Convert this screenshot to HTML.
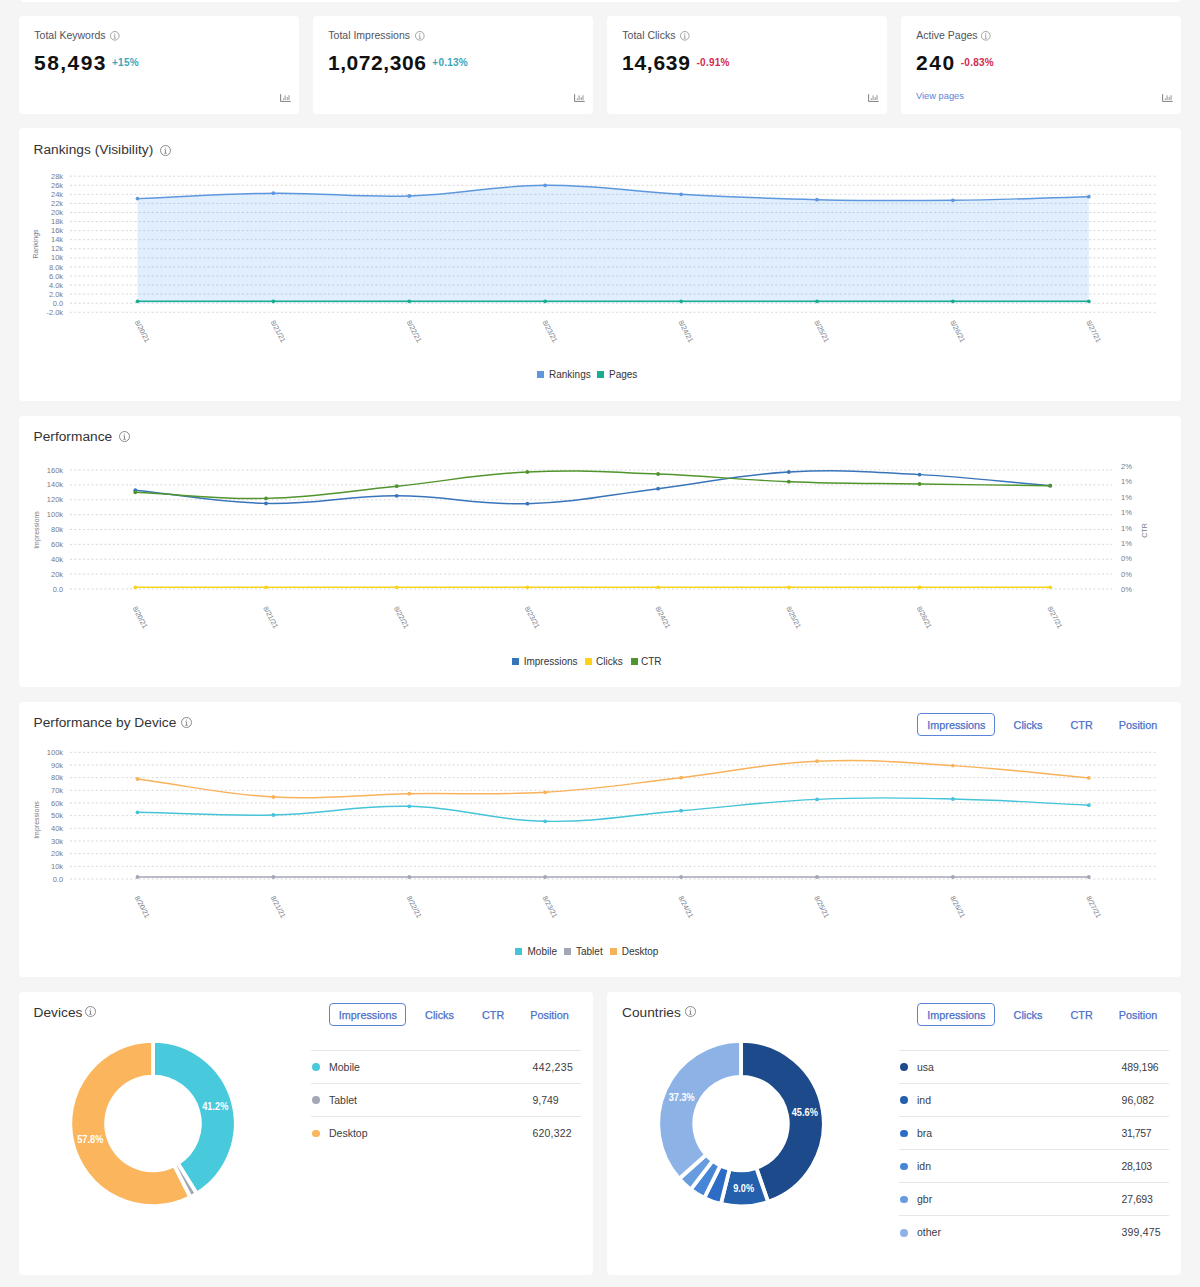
<!DOCTYPE html>
<html><head><meta charset="utf-8">
<style>
*{box-sizing:border-box;margin:0;padding:0}
html,body{width:1200px;height:1287px;overflow:hidden;background:#f5f5f5;font-family:"Liberation Sans", sans-serif;}
.card{position:absolute;background:#fff;border-radius:4px;}
.t{position:absolute;white-space:nowrap;line-height:1;}
svg{overflow:visible}
</style></head><body>

<div class="card" style="left:19.5px;top:-6px;width:1161px;height:7.5px"></div>
<div class="card" style="left:19px;top:16px;width:280px;height:98px">
<div class="t" style="left:15.3px;top:14px;font-size:10.5px;color:#52525c">Total Keywords</div>
<div class="t" style="left:15px;top:36px;font-size:21px;font-weight:bold;color:#111;letter-spacing:1.45px">58,493<span style="font-size:10px;color:#3aa6b9;letter-spacing:0.25px;margin-left:5.05px;vertical-align:4.5px">+15%</span></div>
<svg style="position:absolute;left:261px;top:77px" width="12" height="10" viewBox="0 0 12 10"><path d="M0.6 1.2 V8.4 H10.7" fill="none" stroke="#707070" stroke-width="0.9"/><path d="M3.4 7V5.4 M5.1 7V2.4 M7.2 7V4.1 M9 7V2.2" stroke="#8a8a8a" stroke-width="0.9"/></svg>
</div>
<svg style="position:absolute;left:108.80px;top:29.70px" width="11.60" height="11.60" viewBox="-5.8 -5.8 11.6 11.6"><circle cx="0" cy="0" r="4.35" fill="none" stroke="#9a9a9a" stroke-width="0.9"/><circle cx="0" cy="-2.16" r="0.54" fill="#9a9a9a"/><path d="M-0.96,-0.58 H0 V2.40 M-1.06,2.40 H1.06" fill="none" stroke="#9a9a9a" stroke-width="0.85"/></svg>
<div class="card" style="left:313px;top:16px;width:280px;height:98px">
<div class="t" style="left:15.3px;top:14px;font-size:10.5px;color:#52525c">Total Impressions</div>
<div class="t" style="left:15px;top:36px;font-size:21px;font-weight:bold;color:#111;letter-spacing:0.55px">1,072,306<span style="font-size:10px;color:#3aa6b9;letter-spacing:0.25px;margin-left:5.95px;vertical-align:4.5px">+0.13%</span></div>
<svg style="position:absolute;left:261px;top:77px" width="12" height="10" viewBox="0 0 12 10"><path d="M0.6 1.2 V8.4 H10.7" fill="none" stroke="#707070" stroke-width="0.9"/><path d="M3.4 7V5.4 M5.1 7V2.4 M7.2 7V4.1 M9 7V2.2" stroke="#8a8a8a" stroke-width="0.9"/></svg>
</div>
<svg style="position:absolute;left:413.50px;top:29.70px" width="11.60" height="11.60" viewBox="-5.8 -5.8 11.6 11.6"><circle cx="0" cy="0" r="4.35" fill="none" stroke="#9a9a9a" stroke-width="0.9"/><circle cx="0" cy="-2.16" r="0.54" fill="#9a9a9a"/><path d="M-0.96,-0.58 H0 V2.40 M-1.06,2.40 H1.06" fill="none" stroke="#9a9a9a" stroke-width="0.85"/></svg>
<div class="card" style="left:607px;top:16px;width:280px;height:98px">
<div class="t" style="left:15.3px;top:14px;font-size:10.5px;color:#52525c">Total Clicks</div>
<div class="t" style="left:15px;top:36px;font-size:21px;font-weight:bold;color:#111;letter-spacing:0.75px">14,639<span style="font-size:10px;color:#d32a53;letter-spacing:0.25px;margin-left:5.75px;vertical-align:4.5px">-0.91%</span></div>
<svg style="position:absolute;left:261px;top:77px" width="12" height="10" viewBox="0 0 12 10"><path d="M0.6 1.2 V8.4 H10.7" fill="none" stroke="#707070" stroke-width="0.9"/><path d="M3.4 7V5.4 M5.1 7V2.4 M7.2 7V4.1 M9 7V2.2" stroke="#8a8a8a" stroke-width="0.9"/></svg>
</div>
<svg style="position:absolute;left:679.10px;top:29.70px" width="11.60" height="11.60" viewBox="-5.8 -5.8 11.6 11.6"><circle cx="0" cy="0" r="4.35" fill="none" stroke="#9a9a9a" stroke-width="0.9"/><circle cx="0" cy="-2.16" r="0.54" fill="#9a9a9a"/><path d="M-0.96,-0.58 H0 V2.40 M-1.06,2.40 H1.06" fill="none" stroke="#9a9a9a" stroke-width="0.85"/></svg>
<div class="card" style="left:901px;top:16px;width:280px;height:98px">
<div class="t" style="left:15.3px;top:14px;font-size:10.5px;color:#52525c">Active Pages</div>
<div class="t" style="left:15px;top:36px;font-size:21px;font-weight:bold;color:#111;letter-spacing:1.6px">240<span style="font-size:10px;color:#d32a53;letter-spacing:0.25px;margin-left:4.9px;vertical-align:4.5px">-0.83%</span></div>
<svg style="position:absolute;left:261px;top:77px" width="12" height="10" viewBox="0 0 12 10"><path d="M0.6 1.2 V8.4 H10.7" fill="none" stroke="#707070" stroke-width="0.9"/><path d="M3.4 7V5.4 M5.1 7V2.4 M7.2 7V4.1 M9 7V2.2" stroke="#8a8a8a" stroke-width="0.9"/></svg>
<div class="t" style="left:15px;top:75.8px;font-size:9.3px;color:#5b84d8">View pages</div>
</div>
<svg style="position:absolute;left:979.70px;top:29.70px" width="11.60" height="11.60" viewBox="-5.8 -5.8 11.6 11.6"><circle cx="0" cy="0" r="4.35" fill="none" stroke="#9a9a9a" stroke-width="0.9"/><circle cx="0" cy="-2.16" r="0.54" fill="#9a9a9a"/><path d="M-0.96,-0.58 H0 V2.40 M-1.06,2.40 H1.06" fill="none" stroke="#9a9a9a" stroke-width="0.85"/></svg>
<div class="card" style="left:19px;top:128.25px;width:1162px;height:272.75px"></div>
<div class="t" style="left:33.5px;top:142.5px;font-size:13.7px;letter-spacing:0.03px;color:#333">Rankings (Visibility)</div><svg style="position:absolute;left:158.70px;top:144.00px" width="13.00" height="13.00" viewBox="-6.5 -6.5 13.0 13.0"><circle cx="0" cy="0" r="5.00" fill="none" stroke="#8a8a8a" stroke-width="1"/><circle cx="0" cy="-2.48" r="0.60" fill="#8a8a8a"/><path d="M-1.10,-0.66 H0 V2.75 M-1.21,2.75 H1.21" fill="none" stroke="#8a8a8a" stroke-width="0.95"/></svg>
<svg style="position:absolute;left:0;top:0" width="1200" height="1287" viewBox="0 0 1200 1287">
<line x1="70" y1="176.20" x2="1156" y2="176.20" stroke="#d3d3d3" stroke-width="0.9" stroke-dasharray="2,2.3"/>
<text x="63.10" y="178.80" text-anchor="end" font-size="7.5" fill="#777b87">28k</text>
<line x1="70" y1="185.27" x2="1156" y2="185.27" stroke="#d3d3d3" stroke-width="0.9" stroke-dasharray="2,2.3"/>
<text x="63.10" y="187.87" text-anchor="end" font-size="7.5" fill="#777b87">26k</text>
<line x1="70" y1="194.34" x2="1156" y2="194.34" stroke="#d3d3d3" stroke-width="0.9" stroke-dasharray="2,2.3"/>
<text x="63.10" y="196.94" text-anchor="end" font-size="7.5" fill="#777b87">24k</text>
<line x1="70" y1="203.41" x2="1156" y2="203.41" stroke="#d3d3d3" stroke-width="0.9" stroke-dasharray="2,2.3"/>
<text x="63.10" y="206.01" text-anchor="end" font-size="7.5" fill="#777b87">22k</text>
<line x1="70" y1="212.48" x2="1156" y2="212.48" stroke="#d3d3d3" stroke-width="0.9" stroke-dasharray="2,2.3"/>
<text x="63.10" y="215.08" text-anchor="end" font-size="7.5" fill="#777b87">20k</text>
<line x1="70" y1="221.55" x2="1156" y2="221.55" stroke="#d3d3d3" stroke-width="0.9" stroke-dasharray="2,2.3"/>
<text x="63.10" y="224.15" text-anchor="end" font-size="7.5" fill="#777b87">18k</text>
<line x1="70" y1="230.62" x2="1156" y2="230.62" stroke="#d3d3d3" stroke-width="0.9" stroke-dasharray="2,2.3"/>
<text x="63.10" y="233.22" text-anchor="end" font-size="7.5" fill="#777b87">16k</text>
<line x1="70" y1="239.69" x2="1156" y2="239.69" stroke="#d3d3d3" stroke-width="0.9" stroke-dasharray="2,2.3"/>
<text x="63.10" y="242.29" text-anchor="end" font-size="7.5" fill="#777b87">14k</text>
<line x1="70" y1="248.76" x2="1156" y2="248.76" stroke="#d3d3d3" stroke-width="0.9" stroke-dasharray="2,2.3"/>
<text x="63.10" y="251.36" text-anchor="end" font-size="7.5" fill="#777b87">12k</text>
<line x1="70" y1="257.83" x2="1156" y2="257.83" stroke="#d3d3d3" stroke-width="0.9" stroke-dasharray="2,2.3"/>
<text x="63.10" y="260.43" text-anchor="end" font-size="7.5" fill="#777b87">10k</text>
<line x1="70" y1="266.90" x2="1156" y2="266.90" stroke="#d3d3d3" stroke-width="0.9" stroke-dasharray="2,2.3"/>
<text x="63.10" y="269.50" text-anchor="end" font-size="7.5" fill="#777b87">8.0k</text>
<line x1="70" y1="275.97" x2="1156" y2="275.97" stroke="#d3d3d3" stroke-width="0.9" stroke-dasharray="2,2.3"/>
<text x="63.10" y="278.57" text-anchor="end" font-size="7.5" fill="#777b87">6.0k</text>
<line x1="70" y1="285.04" x2="1156" y2="285.04" stroke="#d3d3d3" stroke-width="0.9" stroke-dasharray="2,2.3"/>
<text x="63.10" y="287.64" text-anchor="end" font-size="7.5" fill="#777b87">4.0k</text>
<line x1="70" y1="294.11" x2="1156" y2="294.11" stroke="#d3d3d3" stroke-width="0.9" stroke-dasharray="2,2.3"/>
<text x="63.10" y="296.71" text-anchor="end" font-size="7.5" fill="#777b87">2.0k</text>
<line x1="70" y1="303.18" x2="1156" y2="303.18" stroke="#d3d3d3" stroke-width="0.9" stroke-dasharray="2,2.3"/>
<text x="63.10" y="305.78" text-anchor="end" font-size="7.5" fill="#777b87">0.0</text>
<line x1="70" y1="312.25" x2="1156" y2="312.25" stroke="#d3d3d3" stroke-width="0.9" stroke-dasharray="2,2.3"/>
<text x="63.10" y="314.85" text-anchor="end" font-size="7.5" fill="#777b87">-2.0k</text>
<path d="M137.50,198.60 C191.86,196.44 219.02,193.72 273.40,193.20 C327.74,192.68 355.02,197.58 409.30,196.00 C463.74,194.42 490.82,185.64 545.20,185.30 C599.54,184.96 626.70,191.42 681.10,194.30 C735.42,197.18 762.62,198.50 817.00,199.70 C871.34,200.90 898.55,200.90 952.90,200.30 C1007.27,199.70 1034.44,198.14 1088.80,196.70 L1088.80,303.2 L137.50,303.2 Z" fill="rgba(54,140,240,0.15)"/>
<path d="M137.50,198.60 C191.86,196.44 219.02,193.72 273.40,193.20 C327.74,192.68 355.02,197.58 409.30,196.00 C463.74,194.42 490.82,185.64 545.20,185.30 C599.54,184.96 626.70,191.42 681.10,194.30 C735.42,197.18 762.62,198.50 817.00,199.70 C871.34,200.90 898.55,200.90 952.90,200.30 C1007.27,199.70 1034.44,198.14 1088.80,196.70" fill="none" stroke="#5d98de" stroke-width="1.45" stroke-linecap="round"/>
<circle cx="137.50" cy="198.60" r="1.9" fill="#5d98de"/>
<circle cx="273.40" cy="193.20" r="1.9" fill="#5d98de"/>
<circle cx="409.30" cy="196.00" r="1.9" fill="#5d98de"/>
<circle cx="545.20" cy="185.30" r="1.9" fill="#5d98de"/>
<circle cx="681.10" cy="194.30" r="1.9" fill="#5d98de"/>
<circle cx="817.00" cy="199.70" r="1.9" fill="#5d98de"/>
<circle cx="952.90" cy="200.30" r="1.9" fill="#5d98de"/>
<circle cx="1088.80" cy="196.70" r="1.9" fill="#5d98de"/>
<path d="M137.50,301.30 C191.86,301.30 219.04,301.30 273.40,301.30 C327.76,301.30 354.94,301.30 409.30,301.30 C463.66,301.30 490.84,301.30 545.20,301.30 C599.56,301.30 626.74,301.30 681.10,301.30 C735.46,301.30 762.64,301.30 817.00,301.30 C871.36,301.30 898.54,301.30 952.90,301.30 C1007.26,301.30 1034.44,301.30 1088.80,301.30" fill="none" stroke="#17ad90" stroke-width="1.45" stroke-linecap="round"/>
<circle cx="137.50" cy="301.30" r="1.9" fill="#17ad90"/>
<circle cx="273.40" cy="301.30" r="1.9" fill="#17ad90"/>
<circle cx="409.30" cy="301.30" r="1.9" fill="#17ad90"/>
<circle cx="545.20" cy="301.30" r="1.9" fill="#17ad90"/>
<circle cx="681.10" cy="301.30" r="1.9" fill="#17ad90"/>
<circle cx="817.00" cy="301.30" r="1.9" fill="#17ad90"/>
<circle cx="952.90" cy="301.30" r="1.9" fill="#17ad90"/>
<circle cx="1088.80" cy="301.30" r="1.9" fill="#17ad90"/>
<text transform="translate(37.5,244) rotate(-90)" text-anchor="middle" font-size="7" fill="#777b87">Rankings</text>
<text transform="translate(134.60,322) rotate(62)" font-size="7.1" fill="#777b87">8/20/21</text>
<text transform="translate(270.50,322) rotate(62)" font-size="7.1" fill="#777b87">8/21/21</text>
<text transform="translate(406.40,322) rotate(62)" font-size="7.1" fill="#777b87">8/22/21</text>
<text transform="translate(542.30,322) rotate(62)" font-size="7.1" fill="#777b87">8/23/21</text>
<text transform="translate(678.20,322) rotate(62)" font-size="7.1" fill="#777b87">8/24/21</text>
<text transform="translate(814.10,322) rotate(62)" font-size="7.1" fill="#777b87">8/25/21</text>
<text transform="translate(950.00,322) rotate(62)" font-size="7.1" fill="#777b87">8/26/21</text>
<text transform="translate(1085.90,322) rotate(62)" font-size="7.1" fill="#777b87">8/27/21</text>
</svg>
<div style="position:absolute;left:536.50px;top:371.00px;width:7.2px;height:7.2px;background:#5d98de"></div>
<div class="t" style="left:549.00px;top:370.40px;font-size:10px;color:#333">Rankings</div>
<div style="position:absolute;left:597.00px;top:371.00px;width:7.2px;height:7.2px;background:#17ad90"></div>
<div class="t" style="left:609.00px;top:370.40px;font-size:10px;color:#333">Pages</div>
<div class="card" style="left:19px;top:415.75px;width:1162px;height:271.25px"></div>
<div class="t" style="left:33.5px;top:429.5px;font-size:13.7px;letter-spacing:0.03px;color:#333">Performance</div><svg style="position:absolute;left:118.20px;top:430.40px" width="13.00" height="13.00" viewBox="-6.5 -6.5 13.0 13.0"><circle cx="0" cy="0" r="5.00" fill="none" stroke="#8a8a8a" stroke-width="1"/><circle cx="0" cy="-2.48" r="0.60" fill="#8a8a8a"/><path d="M-1.10,-0.66 H0 V2.75 M-1.21,2.75 H1.21" fill="none" stroke="#8a8a8a" stroke-width="0.95"/></svg>
<svg style="position:absolute;left:0;top:0" width="1200" height="1287" viewBox="0 0 1200 1287">
<line x1="70" y1="470.00" x2="1112" y2="470.00" stroke="#d3d3d3" stroke-width="0.9" stroke-dasharray="2,2.3"/>
<text x="63.10" y="472.60" text-anchor="end" font-size="7.5" fill="#777b87">160k</text>
<line x1="70" y1="484.87" x2="1112" y2="484.87" stroke="#d3d3d3" stroke-width="0.9" stroke-dasharray="2,2.3"/>
<text x="63.10" y="487.47" text-anchor="end" font-size="7.5" fill="#777b87">140k</text>
<line x1="70" y1="499.74" x2="1112" y2="499.74" stroke="#d3d3d3" stroke-width="0.9" stroke-dasharray="2,2.3"/>
<text x="63.10" y="502.34" text-anchor="end" font-size="7.5" fill="#777b87">120k</text>
<line x1="70" y1="514.61" x2="1112" y2="514.61" stroke="#d3d3d3" stroke-width="0.9" stroke-dasharray="2,2.3"/>
<text x="63.10" y="517.21" text-anchor="end" font-size="7.5" fill="#777b87">100k</text>
<line x1="70" y1="529.48" x2="1112" y2="529.48" stroke="#d3d3d3" stroke-width="0.9" stroke-dasharray="2,2.3"/>
<text x="63.10" y="532.08" text-anchor="end" font-size="7.5" fill="#777b87">80k</text>
<line x1="70" y1="544.35" x2="1112" y2="544.35" stroke="#d3d3d3" stroke-width="0.9" stroke-dasharray="2,2.3"/>
<text x="63.10" y="546.95" text-anchor="end" font-size="7.5" fill="#777b87">60k</text>
<line x1="70" y1="559.22" x2="1112" y2="559.22" stroke="#d3d3d3" stroke-width="0.9" stroke-dasharray="2,2.3"/>
<text x="63.10" y="561.82" text-anchor="end" font-size="7.5" fill="#777b87">40k</text>
<line x1="70" y1="574.09" x2="1112" y2="574.09" stroke="#d3d3d3" stroke-width="0.9" stroke-dasharray="2,2.3"/>
<text x="63.10" y="576.69" text-anchor="end" font-size="7.5" fill="#777b87">20k</text>
<line x1="70" y1="588.96" x2="1112" y2="588.96" stroke="#d3d3d3" stroke-width="0.9" stroke-dasharray="2,2.3"/>
<text x="63.10" y="591.56" text-anchor="end" font-size="7.5" fill="#777b87">0.0</text>
<text x="1121.00" y="469.00" text-anchor="start" font-size="7.5" fill="#777b87">2%</text>
<text x="1121.00" y="484.38" text-anchor="start" font-size="7.5" fill="#777b87">1%</text>
<text x="1121.00" y="499.75" text-anchor="start" font-size="7.5" fill="#777b87">1%</text>
<text x="1121.00" y="515.12" text-anchor="start" font-size="7.5" fill="#777b87">1%</text>
<text x="1121.00" y="530.50" text-anchor="start" font-size="7.5" fill="#777b87">1%</text>
<text x="1121.00" y="545.88" text-anchor="start" font-size="7.5" fill="#777b87">1%</text>
<text x="1121.00" y="561.25" text-anchor="start" font-size="7.5" fill="#777b87">0%</text>
<text x="1121.00" y="576.62" text-anchor="start" font-size="7.5" fill="#777b87">0%</text>
<text x="1121.00" y="592.00" text-anchor="start" font-size="7.5" fill="#777b87">0%</text>
<path d="M135.30,587.30 C187.58,587.30 213.72,587.30 266.00,587.30 C318.28,587.30 344.42,587.30 396.70,587.30 C448.98,587.30 475.12,587.30 527.40,587.30 C579.68,587.30 605.82,587.30 658.10,587.30 C710.38,587.30 736.52,587.30 788.80,587.30 C841.08,587.30 867.22,587.30 919.50,587.30 C971.78,587.30 997.92,587.30 1050.20,587.30" fill="none" stroke="#f7d51d" stroke-width="1.45" stroke-linecap="round"/>
<circle cx="135.30" cy="587.30" r="1.9" fill="#f7d51d"/>
<circle cx="266.00" cy="587.30" r="1.9" fill="#f7d51d"/>
<circle cx="396.70" cy="587.30" r="1.9" fill="#f7d51d"/>
<circle cx="527.40" cy="587.30" r="1.9" fill="#f7d51d"/>
<circle cx="658.10" cy="587.30" r="1.9" fill="#f7d51d"/>
<circle cx="788.80" cy="587.30" r="1.9" fill="#f7d51d"/>
<circle cx="919.50" cy="587.30" r="1.9" fill="#f7d51d"/>
<circle cx="1050.20" cy="587.30" r="1.9" fill="#f7d51d"/>
<path d="M135.30,490.20 C187.58,495.48 213.63,502.28 266.00,503.40 C318.19,504.52 344.42,495.74 396.70,495.80 C448.98,495.86 475.24,505.12 527.40,503.70 C579.80,502.28 605.86,495.04 658.10,488.70 C710.42,482.36 736.31,474.83 788.80,472.00 C840.87,469.19 867.31,471.86 919.50,474.60 C971.87,477.34 997.92,481.26 1050.20,485.70" fill="none" stroke="#3874b9" stroke-width="1.45" stroke-linecap="round"/>
<circle cx="135.30" cy="490.20" r="1.9" fill="#3874b9"/>
<circle cx="266.00" cy="503.40" r="1.9" fill="#3874b9"/>
<circle cx="396.70" cy="495.80" r="1.9" fill="#3874b9"/>
<circle cx="527.40" cy="503.70" r="1.9" fill="#3874b9"/>
<circle cx="658.10" cy="488.70" r="1.9" fill="#3874b9"/>
<circle cx="788.80" cy="472.00" r="1.9" fill="#3874b9"/>
<circle cx="919.50" cy="474.60" r="1.9" fill="#3874b9"/>
<circle cx="1050.20" cy="485.70" r="1.9" fill="#3874b9"/>
<path d="M135.30,492.30 C187.58,494.74 213.80,499.62 266.00,498.40 C318.36,497.18 344.46,491.48 396.70,486.20 C449.02,480.92 474.97,474.45 527.40,472.00 C579.53,469.57 605.86,472.06 658.10,474.00 C710.42,475.94 736.48,479.70 788.80,481.70 C841.04,483.70 867.22,483.20 919.50,484.00 C971.78,484.80 997.92,485.02 1050.20,485.70" fill="none" stroke="#4f942c" stroke-width="1.45" stroke-linecap="round"/>
<circle cx="135.30" cy="492.30" r="1.9" fill="#4f942c"/>
<circle cx="266.00" cy="498.40" r="1.9" fill="#4f942c"/>
<circle cx="396.70" cy="486.20" r="1.9" fill="#4f942c"/>
<circle cx="527.40" cy="472.00" r="1.9" fill="#4f942c"/>
<circle cx="658.10" cy="474.00" r="1.9" fill="#4f942c"/>
<circle cx="788.80" cy="481.70" r="1.9" fill="#4f942c"/>
<circle cx="919.50" cy="484.00" r="1.9" fill="#4f942c"/>
<circle cx="1050.20" cy="485.70" r="1.9" fill="#4f942c"/>
<text transform="translate(38.5,530) rotate(-90)" text-anchor="middle" font-size="7" fill="#777b87">Impressions</text>
<text transform="translate(1146.5,530.5) rotate(-90)" text-anchor="middle" font-size="7" fill="#777b87">CTR</text>
<text transform="translate(132.40,608) rotate(62)" font-size="7.1" fill="#777b87">8/20/21</text>
<text transform="translate(263.10,608) rotate(62)" font-size="7.1" fill="#777b87">8/21/21</text>
<text transform="translate(393.80,608) rotate(62)" font-size="7.1" fill="#777b87">8/22/21</text>
<text transform="translate(524.50,608) rotate(62)" font-size="7.1" fill="#777b87">8/23/21</text>
<text transform="translate(655.20,608) rotate(62)" font-size="7.1" fill="#777b87">8/24/21</text>
<text transform="translate(785.90,608) rotate(62)" font-size="7.1" fill="#777b87">8/25/21</text>
<text transform="translate(916.60,608) rotate(62)" font-size="7.1" fill="#777b87">8/26/21</text>
<text transform="translate(1047.30,608) rotate(62)" font-size="7.1" fill="#777b87">8/27/21</text>
</svg>
<div style="position:absolute;left:512.00px;top:657.50px;width:7.2px;height:7.2px;background:#3874b9"></div>
<div class="t" style="left:523.70px;top:656.90px;font-size:10px;color:#333">Impressions</div>
<div style="position:absolute;left:584.60px;top:657.50px;width:7.2px;height:7.2px;background:#fcd116"></div>
<div class="t" style="left:596.00px;top:656.90px;font-size:10px;color:#333">Clicks</div>
<div style="position:absolute;left:630.50px;top:657.50px;width:7.2px;height:7.2px;background:#4f942c"></div>
<div class="t" style="left:641.00px;top:656.90px;font-size:10px;color:#333">CTR</div>
<div class="card" style="left:19px;top:702px;width:1162px;height:274.8px"></div>
<div class="t" style="left:33.5px;top:715.5px;font-size:13.7px;letter-spacing:0.03px;color:#333">Performance by Device</div><svg style="position:absolute;left:179.50px;top:715.70px" width="13.00" height="13.00" viewBox="-6.5 -6.5 13.0 13.0"><circle cx="0" cy="0" r="5.00" fill="none" stroke="#8a8a8a" stroke-width="1"/><circle cx="0" cy="-2.48" r="0.60" fill="#8a8a8a"/><path d="M-1.10,-0.66 H0 V2.75 M-1.21,2.75 H1.21" fill="none" stroke="#8a8a8a" stroke-width="0.95"/></svg>
<svg style="position:absolute;left:0;top:0" width="1200" height="1287" viewBox="0 0 1200 1287">
<line x1="70" y1="752.30" x2="1156" y2="752.30" stroke="#d3d3d3" stroke-width="0.9" stroke-dasharray="2,2.3"/>
<text x="63.10" y="754.90" text-anchor="end" font-size="7.5" fill="#777b87">100k</text>
<line x1="70" y1="764.97" x2="1156" y2="764.97" stroke="#d3d3d3" stroke-width="0.9" stroke-dasharray="2,2.3"/>
<text x="63.10" y="767.57" text-anchor="end" font-size="7.5" fill="#777b87">90k</text>
<line x1="70" y1="777.64" x2="1156" y2="777.64" stroke="#d3d3d3" stroke-width="0.9" stroke-dasharray="2,2.3"/>
<text x="63.10" y="780.24" text-anchor="end" font-size="7.5" fill="#777b87">80k</text>
<line x1="70" y1="790.31" x2="1156" y2="790.31" stroke="#d3d3d3" stroke-width="0.9" stroke-dasharray="2,2.3"/>
<text x="63.10" y="792.91" text-anchor="end" font-size="7.5" fill="#777b87">70k</text>
<line x1="70" y1="802.98" x2="1156" y2="802.98" stroke="#d3d3d3" stroke-width="0.9" stroke-dasharray="2,2.3"/>
<text x="63.10" y="805.58" text-anchor="end" font-size="7.5" fill="#777b87">60k</text>
<line x1="70" y1="815.65" x2="1156" y2="815.65" stroke="#d3d3d3" stroke-width="0.9" stroke-dasharray="2,2.3"/>
<text x="63.10" y="818.25" text-anchor="end" font-size="7.5" fill="#777b87">50k</text>
<line x1="70" y1="828.32" x2="1156" y2="828.32" stroke="#d3d3d3" stroke-width="0.9" stroke-dasharray="2,2.3"/>
<text x="63.10" y="830.92" text-anchor="end" font-size="7.5" fill="#777b87">40k</text>
<line x1="70" y1="840.99" x2="1156" y2="840.99" stroke="#d3d3d3" stroke-width="0.9" stroke-dasharray="2,2.3"/>
<text x="63.10" y="843.59" text-anchor="end" font-size="7.5" fill="#777b87">30k</text>
<line x1="70" y1="853.66" x2="1156" y2="853.66" stroke="#d3d3d3" stroke-width="0.9" stroke-dasharray="2,2.3"/>
<text x="63.10" y="856.26" text-anchor="end" font-size="7.5" fill="#777b87">20k</text>
<line x1="70" y1="866.33" x2="1156" y2="866.33" stroke="#d3d3d3" stroke-width="0.9" stroke-dasharray="2,2.3"/>
<text x="63.10" y="868.93" text-anchor="end" font-size="7.5" fill="#777b87">10k</text>
<line x1="70" y1="879.00" x2="1156" y2="879.00" stroke="#d3d3d3" stroke-width="0.9" stroke-dasharray="2,2.3"/>
<text x="63.10" y="881.60" text-anchor="end" font-size="7.5" fill="#777b87">0.0</text>
<path d="M137.50,877.00 C191.86,877.00 219.04,877.00 273.40,877.00 C327.76,877.00 354.94,877.00 409.30,877.00 C463.66,877.00 490.84,877.00 545.20,877.00 C599.56,877.00 626.74,877.00 681.10,877.00 C735.46,877.00 762.64,877.00 817.00,877.00 C871.36,877.00 898.54,877.00 952.90,877.00 C1007.26,877.00 1034.44,877.00 1088.80,877.00" fill="none" stroke="#a3a7b5" stroke-width="1.45" stroke-linecap="round"/>
<circle cx="137.50" cy="877.00" r="1.9" fill="#a3a7b5"/>
<circle cx="273.40" cy="877.00" r="1.9" fill="#a3a7b5"/>
<circle cx="409.30" cy="877.00" r="1.9" fill="#a3a7b5"/>
<circle cx="545.20" cy="877.00" r="1.9" fill="#a3a7b5"/>
<circle cx="681.10" cy="877.00" r="1.9" fill="#a3a7b5"/>
<circle cx="817.00" cy="877.00" r="1.9" fill="#a3a7b5"/>
<circle cx="952.90" cy="877.00" r="1.9" fill="#a3a7b5"/>
<circle cx="1088.80" cy="877.00" r="1.9" fill="#a3a7b5"/>
<path d="M137.50,812.30 C191.86,813.38 219.09,816.20 273.40,815.00 C327.81,813.80 355.05,805.04 409.30,806.30 C463.77,807.56 490.76,820.42 545.20,821.30 C599.48,822.18 626.75,815.08 681.10,810.70 C735.47,806.32 762.55,801.74 817.00,799.40 C871.27,797.06 898.57,797.84 952.90,799.00 C1007.29,800.16 1034.44,802.72 1088.80,805.20" fill="none" stroke="#45c3d8" stroke-width="1.45" stroke-linecap="round"/>
<circle cx="137.50" cy="812.30" r="1.9" fill="#45c3d8"/>
<circle cx="273.40" cy="815.00" r="1.9" fill="#45c3d8"/>
<circle cx="409.30" cy="806.30" r="1.9" fill="#45c3d8"/>
<circle cx="545.20" cy="821.30" r="1.9" fill="#45c3d8"/>
<circle cx="681.10" cy="810.70" r="1.9" fill="#45c3d8"/>
<circle cx="817.00" cy="799.40" r="1.9" fill="#45c3d8"/>
<circle cx="952.90" cy="799.00" r="1.9" fill="#45c3d8"/>
<circle cx="1088.80" cy="805.20" r="1.9" fill="#45c3d8"/>
<path d="M137.50,779.00 C191.86,786.20 218.81,794.05 273.40,797.00 C327.53,799.93 354.93,794.64 409.30,793.70 C463.65,792.76 490.99,795.49 545.20,792.30 C599.71,789.09 626.78,783.92 681.10,777.70 C735.50,771.48 762.46,763.63 817.00,761.20 C871.18,758.79 898.64,762.27 952.90,765.60 C1007.36,768.95 1034.44,772.98 1088.80,777.90" fill="none" stroke="#f8b25a" stroke-width="1.45" stroke-linecap="round"/>
<circle cx="137.50" cy="779.00" r="1.9" fill="#f8b25a"/>
<circle cx="273.40" cy="797.00" r="1.9" fill="#f8b25a"/>
<circle cx="409.30" cy="793.70" r="1.9" fill="#f8b25a"/>
<circle cx="545.20" cy="792.30" r="1.9" fill="#f8b25a"/>
<circle cx="681.10" cy="777.70" r="1.9" fill="#f8b25a"/>
<circle cx="817.00" cy="761.20" r="1.9" fill="#f8b25a"/>
<circle cx="952.90" cy="765.60" r="1.9" fill="#f8b25a"/>
<circle cx="1088.80" cy="777.90" r="1.9" fill="#f8b25a"/>
<text transform="translate(38.5,820) rotate(-90)" text-anchor="middle" font-size="7" fill="#777b87">Impressions</text>
<text transform="translate(134.60,897.5) rotate(62)" font-size="7.1" fill="#777b87">8/20/21</text>
<text transform="translate(270.50,897.5) rotate(62)" font-size="7.1" fill="#777b87">8/21/21</text>
<text transform="translate(406.40,897.5) rotate(62)" font-size="7.1" fill="#777b87">8/22/21</text>
<text transform="translate(542.30,897.5) rotate(62)" font-size="7.1" fill="#777b87">8/23/21</text>
<text transform="translate(678.20,897.5) rotate(62)" font-size="7.1" fill="#777b87">8/24/21</text>
<text transform="translate(814.10,897.5) rotate(62)" font-size="7.1" fill="#777b87">8/25/21</text>
<text transform="translate(950.00,897.5) rotate(62)" font-size="7.1" fill="#777b87">8/26/21</text>
<text transform="translate(1085.90,897.5) rotate(62)" font-size="7.1" fill="#777b87">8/27/21</text>
</svg>
<div style="position:absolute;left:515.30px;top:947.50px;width:7.2px;height:7.2px;background:#45c3d8"></div>
<div class="t" style="left:527.50px;top:946.90px;font-size:10px;color:#333">Mobile</div>
<div style="position:absolute;left:564.00px;top:947.50px;width:7.2px;height:7.2px;background:#a3a7b5"></div>
<div class="t" style="left:576.00px;top:946.90px;font-size:10px;color:#333">Tablet</div>
<div style="position:absolute;left:609.50px;top:947.50px;width:7.2px;height:7.2px;background:#f8b25a"></div>
<div class="t" style="left:621.70px;top:946.90px;font-size:10px;color:#333">Desktop</div>
<div style="position:absolute;left:917.3px;top:713.2px;width:77.5px;height:22.8px;border:1px solid #5a85d6;border-radius:4px"></div>
<div class="t" style="left:927.30px;top:719.50px;font-size:10.8px;color:#4a70c8;-webkit-text-stroke:0.25px #4a70c8">Impressions</div>
<div class="t" style="left:1013.60px;top:719.50px;font-size:10.8px;color:#4a70c8;-webkit-text-stroke:0.25px #4a70c8">Clicks</div>
<div class="t" style="left:1070.50px;top:719.50px;font-size:10.8px;color:#4a70c8;-webkit-text-stroke:0.25px #4a70c8">CTR</div>
<div class="t" style="left:1118.80px;top:719.50px;font-size:10.8px;color:#4a70c8;-webkit-text-stroke:0.25px #4a70c8">Position</div>
<div class="card" style="left:19px;top:991.7px;width:573.8px;height:283.3px"></div>
<div class="t" style="left:33.5px;top:1006px;font-size:13.7px;letter-spacing:0.03px;color:#333">Devices</div><svg style="position:absolute;left:84.20px;top:1005.40px" width="13.00" height="13.00" viewBox="-6.5 -6.5 13.0 13.0"><circle cx="0" cy="0" r="5.00" fill="none" stroke="#8a8a8a" stroke-width="1"/><circle cx="0" cy="-2.48" r="0.60" fill="#8a8a8a"/><path d="M-1.10,-0.66 H0 V2.75 M-1.21,2.75 H1.21" fill="none" stroke="#8a8a8a" stroke-width="0.95"/></svg>
<div style="position:absolute;left:328.8px;top:1003.4px;width:77.5px;height:22.8px;border:1px solid #5a85d6;border-radius:4px"></div>
<div class="t" style="left:338.80px;top:1009.70px;font-size:10.8px;color:#4a70c8;-webkit-text-stroke:0.25px #4a70c8">Impressions</div>
<div class="t" style="left:425.10px;top:1009.70px;font-size:10.8px;color:#4a70c8;-webkit-text-stroke:0.25px #4a70c8">Clicks</div>
<div class="t" style="left:482.00px;top:1009.70px;font-size:10.8px;color:#4a70c8;-webkit-text-stroke:0.25px #4a70c8">CTR</div>
<div class="t" style="left:530.30px;top:1009.70px;font-size:10.8px;color:#4a70c8;-webkit-text-stroke:0.25px #4a70c8">Position</div>
<svg style="position:absolute;left:0;top:0" width="1200" height="1287" viewBox="0 0 1200 1287">
<path d="M153.00,1040.80 A82.7,82.7 0 0 1 196.80,1193.65 L177.84,1163.28 A46.9,46.9 0 0 0 153.00,1076.60 Z" fill="#48c9dc" stroke="#fff" stroke-width="3.8" stroke-linejoin="miter"/>
<path d="M196.80,1193.65 A82.7,82.7 0 0 1 190.37,1197.28 L174.19,1165.34 A46.9,46.9 0 0 0 177.84,1163.28 Z" fill="#a4a8b6" stroke="#fff" stroke-width="3.8" stroke-linejoin="miter"/>
<path d="M190.37,1197.28 A82.7,82.7 0 1 1 153.00,1040.80 L153.00,1076.60 A46.9,46.9 0 1 0 174.19,1165.34 Z" fill="#fbb55c" stroke="#fff" stroke-width="3.8" stroke-linejoin="miter"/>
<text x="202.25" y="1109.50" font-size="10.6" font-weight="bold" textLength="26.1" lengthAdjust="spacingAndGlyphs" fill="#fff">41.2%</text>
<text x="77.25" y="1143.20" font-size="10.6" font-weight="bold" textLength="26.1" lengthAdjust="spacingAndGlyphs" fill="#fff">57.8%</text>
</svg>
<div style="position:absolute;left:311px;top:1049.80px;width:270px;height:1px;background:#e6e7eb"></div>
<div style="position:absolute;left:312.20px;top:1063.40px;width:7.9px;height:7.9px;border-radius:50%;background:#48c9dc"></div>
<div class="t" style="left:329.00px;top:1062.10px;font-size:10.5px;color:#3c3c44">Mobile</div>
<svg style="position:absolute;left:0;top:0" width="1" height="1"><text x="532.50" y="1071.20" font-size="10.5" fill="#3c3c44" textLength="40.4" lengthAdjust="spacing">442,235</text></svg>
<div style="position:absolute;left:311px;top:1082.85px;width:270px;height:1px;background:#e6e7eb"></div>
<div style="position:absolute;left:312.20px;top:1096.45px;width:7.9px;height:7.9px;border-radius:50%;background:#a4a8b6"></div>
<div class="t" style="left:329.00px;top:1095.15px;font-size:10.5px;color:#3c3c44">Tablet</div>
<svg style="position:absolute;left:0;top:0" width="1" height="1"><text x="532.50" y="1104.25" font-size="10.5" fill="#3c3c44" textLength="26.1" lengthAdjust="spacing">9,749</text></svg>
<div style="position:absolute;left:311px;top:1115.90px;width:270px;height:1px;background:#e6e7eb"></div>
<div style="position:absolute;left:312.20px;top:1129.50px;width:7.9px;height:7.9px;border-radius:50%;background:#fbb55c"></div>
<div class="t" style="left:329.00px;top:1128.20px;font-size:10.5px;color:#3c3c44">Desktop</div>
<svg style="position:absolute;left:0;top:0" width="1" height="1"><text x="532.50" y="1137.30" font-size="10.5" fill="#3c3c44" textLength="39.1" lengthAdjust="spacing">620,322</text></svg>
<div class="card" style="left:607.2px;top:991.7px;width:573.8px;height:283.3px"></div>
<div class="t" style="left:622px;top:1006px;font-size:13.7px;letter-spacing:0.03px;color:#333">Countries</div><svg style="position:absolute;left:684.00px;top:1005.40px" width="13.00" height="13.00" viewBox="-6.5 -6.5 13.0 13.0"><circle cx="0" cy="0" r="5.00" fill="none" stroke="#8a8a8a" stroke-width="1"/><circle cx="0" cy="-2.48" r="0.60" fill="#8a8a8a"/><path d="M-1.10,-0.66 H0 V2.75 M-1.21,2.75 H1.21" fill="none" stroke="#8a8a8a" stroke-width="0.95"/></svg>
<div style="position:absolute;left:917.3px;top:1003.4px;width:77.5px;height:22.8px;border:1px solid #5a85d6;border-radius:4px"></div>
<div class="t" style="left:927.30px;top:1009.70px;font-size:10.8px;color:#4a70c8;-webkit-text-stroke:0.25px #4a70c8">Impressions</div>
<div class="t" style="left:1013.60px;top:1009.70px;font-size:10.8px;color:#4a70c8;-webkit-text-stroke:0.25px #4a70c8">Clicks</div>
<div class="t" style="left:1070.50px;top:1009.70px;font-size:10.8px;color:#4a70c8;-webkit-text-stroke:0.25px #4a70c8">CTR</div>
<div class="t" style="left:1118.80px;top:1009.70px;font-size:10.8px;color:#4a70c8;-webkit-text-stroke:0.25px #4a70c8">Position</div>
<svg style="position:absolute;left:0;top:0" width="1200" height="1287" viewBox="0 0 1200 1287">
<path d="M741.00,1040.80 A82.8,82.8 0 0 1 768.05,1201.86 L756.29,1167.83 A46.8,46.8 0 0 0 741.00,1076.80 Z" fill="#1d4a8a" stroke="#fff" stroke-width="3.8" stroke-linejoin="miter"/>
<path d="M768.05,1201.86 A82.8,82.8 0 0 1 720.87,1203.92 L729.62,1169.00 A46.8,46.8 0 0 0 756.29,1167.83 Z" fill="#2560ac" stroke="#fff" stroke-width="3.8" stroke-linejoin="miter"/>
<path d="M720.87,1203.92 A82.8,82.8 0 0 1 704.32,1197.83 L720.27,1165.56 A46.8,46.8 0 0 0 729.62,1169.00 Z" fill="#2d6cc4" stroke="#fff" stroke-width="3.8" stroke-linejoin="miter"/>
<path d="M704.32,1197.83 A82.8,82.8 0 0 1 690.79,1189.44 L712.62,1160.81 A46.8,46.8 0 0 0 720.27,1165.56 Z" fill="#4786d6" stroke="#fff" stroke-width="3.8" stroke-linejoin="miter"/>
<path d="M690.79,1189.44 A82.8,82.8 0 0 1 679.24,1178.75 L706.09,1154.77 A46.8,46.8 0 0 0 712.62,1160.81 Z" fill="#679ddf" stroke="#fff" stroke-width="3.8" stroke-linejoin="miter"/>
<path d="M679.24,1178.75 A82.8,82.8 0 0 1 741.00,1040.80 L741.00,1076.80 A46.8,46.8 0 0 0 706.09,1154.77 Z" fill="#8db3e6" stroke="#fff" stroke-width="3.8" stroke-linejoin="miter"/>
<text x="791.75" y="1115.90" font-size="10.6" font-weight="bold" textLength="26.1" lengthAdjust="spacingAndGlyphs" fill="#fff">45.6%</text>
<text x="733.20" y="1191.90" font-size="10.6" font-weight="bold" textLength="21" lengthAdjust="spacingAndGlyphs" fill="#fff">9.0%</text>
<text x="668.65" y="1100.90" font-size="10.6" font-weight="bold" textLength="26.1" lengthAdjust="spacingAndGlyphs" fill="#fff">37.3%</text>
</svg>
<div style="position:absolute;left:899px;top:1049.80px;width:270px;height:1px;background:#e6e7eb"></div>
<div style="position:absolute;left:900.20px;top:1063.40px;width:7.9px;height:7.9px;border-radius:50%;background:#1d4a8a"></div>
<div class="t" style="left:917.00px;top:1062.10px;font-size:10.5px;color:#3c3c44">usa</div>
<svg style="position:absolute;left:0;top:0" width="1" height="1"><text x="1121.50" y="1071.20" font-size="10.5" fill="#3c3c44" textLength="37.2" lengthAdjust="spacing">489,196</text></svg>
<div style="position:absolute;left:899px;top:1082.85px;width:270px;height:1px;background:#e6e7eb"></div>
<div style="position:absolute;left:900.20px;top:1096.45px;width:7.9px;height:7.9px;border-radius:50%;background:#2560ac"></div>
<div class="t" style="left:917.00px;top:1095.15px;font-size:10.5px;color:#3c3c44">ind</div>
<svg style="position:absolute;left:0;top:0" width="1" height="1"><text x="1121.50" y="1104.25" font-size="10.5" fill="#3c3c44" textLength="32.6" lengthAdjust="spacing">96,082</text></svg>
<div style="position:absolute;left:899px;top:1115.90px;width:270px;height:1px;background:#e6e7eb"></div>
<div style="position:absolute;left:900.20px;top:1129.50px;width:7.9px;height:7.9px;border-radius:50%;background:#2d6cc4"></div>
<div class="t" style="left:917.00px;top:1128.20px;font-size:10.5px;color:#3c3c44">bra</div>
<svg style="position:absolute;left:0;top:0" width="1" height="1"><text x="1121.50" y="1137.30" font-size="10.5" fill="#3c3c44" textLength="30.0" lengthAdjust="spacing">31,757</text></svg>
<div style="position:absolute;left:899px;top:1148.95px;width:270px;height:1px;background:#e6e7eb"></div>
<div style="position:absolute;left:900.20px;top:1162.55px;width:7.9px;height:7.9px;border-radius:50%;background:#4786d6"></div>
<div class="t" style="left:917.00px;top:1161.25px;font-size:10.5px;color:#3c3c44">idn</div>
<svg style="position:absolute;left:0;top:0" width="1" height="1"><text x="1121.50" y="1170.35" font-size="10.5" fill="#3c3c44" textLength="30.7" lengthAdjust="spacing">28,103</text></svg>
<div style="position:absolute;left:899px;top:1182.00px;width:270px;height:1px;background:#e6e7eb"></div>
<div style="position:absolute;left:900.20px;top:1195.60px;width:7.9px;height:7.9px;border-radius:50%;background:#679ddf"></div>
<div class="t" style="left:917.00px;top:1194.30px;font-size:10.5px;color:#3c3c44">gbr</div>
<svg style="position:absolute;left:0;top:0" width="1" height="1"><text x="1121.50" y="1203.40" font-size="10.5" fill="#3c3c44" textLength="31.4" lengthAdjust="spacing">27,693</text></svg>
<div style="position:absolute;left:899px;top:1215.05px;width:270px;height:1px;background:#e6e7eb"></div>
<div style="position:absolute;left:900.20px;top:1228.65px;width:7.9px;height:7.9px;border-radius:50%;background:#8db3e6"></div>
<div class="t" style="left:917.00px;top:1227.35px;font-size:10.5px;color:#3c3c44">other</div>
<svg style="position:absolute;left:0;top:0" width="1" height="1"><text x="1121.50" y="1236.45" font-size="10.5" fill="#3c3c44" textLength="39.1" lengthAdjust="spacing">399,475</text></svg>
</body></html>
